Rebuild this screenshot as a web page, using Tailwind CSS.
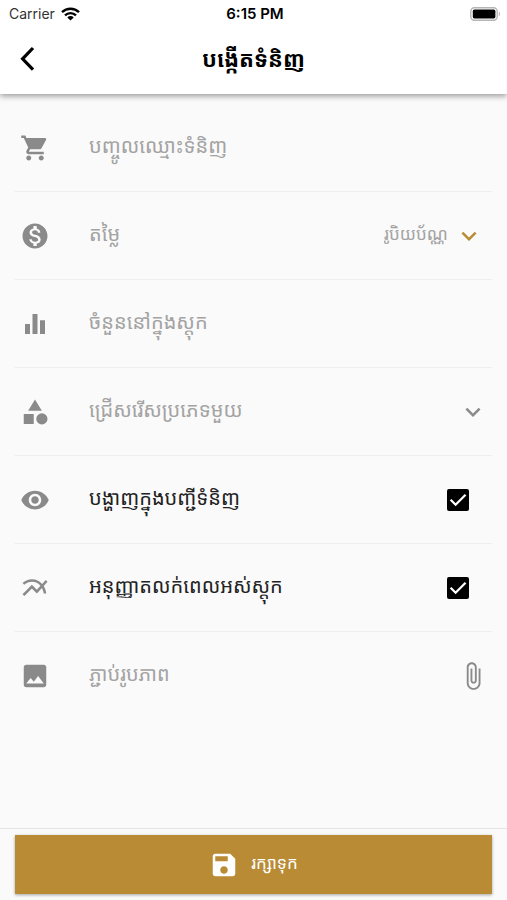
<!DOCTYPE html>
<html lang="km">
  <head>
    <meta charset="UTF-8" />
    <meta name="viewport" content="width=device-width, initial-scale=1.0" />
    <title>បង្កើតទំនិញ</title>
    <script src="https://cdn.jsdelivr.net/npm/@tailwindcss/browser@4"></script>
  </head>
  <body class="min-h-screen bg-[#fafafa] flex flex-col font-['Inter','Noto_Sans_Khmer','Noto_Sans',sans-serif] text-xl/10 text-[#222222]">
    <header class="bg-white shadow-[0_2px_6px_rgba(0,0,0,0.4)]">
      <!-- Status bar -->
      <div class="grid grid-cols-3 items-center h-7 pl-[9px] pr-1.5 text-sm text-black">
        <div class="flex items-center gap-1.5">
          <span class="text-[#333333]">Carrier</span>
          <svg class="w-[19px] h-[14px]" viewBox="0 0 19 14" fill="none" stroke="black" stroke-width="2.4">
            <path d="M1 5.2a12.2 12.2 0 0 1 17 0" />
            <path d="M4 8.3a8 8 0 0 1 11 0" />
            <path d="M9.5 13.6L6.3 10.4a4.6 4.6 0 0 1 6.4 0z" fill="black" stroke="none" />
          </svg>
        </div>
        <span class="text-center text-[15px] font-semibold">6:15 PM</span>
        <svg class="justify-self-end w-[31px] h-[14px]" viewBox="0 0 31 14">
          <rect x="0.8" y="0.8" width="26.4" height="12.4" rx="3.6" fill="white" stroke="#b5b5b5" stroke-width="1.4" />
          <rect x="2.8" y="2.6" width="22.6" height="8.8" rx="1.6" fill="black" />
          <path d="M28.8 4.8c1.6.6 1.6 3.8 0 4.4z" fill="#b5b5b5" />
        </svg>
      </div>

      <!-- Title -->
      <div class="grid grid-cols-[40px_1fr_40px] items-center h-[66px] px-[7px] pb-1">
        <button type="button" aria-label="ថយក្រោយ" class="flex justify-center cursor-pointer">
          <svg class="w-6 h-7" viewBox="0 0 24 28" fill="none" stroke="black" stroke-width="3.2">
            <path d="M18 3L7.6 13.8L18 24.6" />
          </svg>
        </button>
        <h1 class="text-center text-[22px] font-bold text-black">បង្កើតទំនិញ</h1>
      </div>
    </header>

    <form id="productForm" class="flex-1 px-[15px] pt-2.5 font-['Noto_Sans','Noto_Sans_Khmer',sans-serif]">
      <div class="flex items-center h-[88px] pl-[5px] border-b border-[#eeeeee]">
        <svg class="w-[30px] h-[30px] shrink-0" viewBox="0 0 24 24" fill="#8a8a8a">
          <path d="M7 18c-1.1 0-1.99.9-1.99 2S5.9 22 7 22s2-.9 2-2-.9-2-2-2zM1 2v2h2l3.6 7.59-1.35 2.45c-.16.28-.25.61-.25.96 0 1.1.9 2 2 2h12v-2H7.42c-.14 0-.25-.11-.25-.25l.03-.12.9-1.63h7.45c.75 0 1.41-.41 1.75-1.03l3.58-6.49A1 1 0 0 0 20 4H5.21l-.94-2H1zm16 16c-1.1 0-1.99.9-1.99 2s.89 2 1.99 2 2-.9 2-2-.9-2-2-2z" />
        </svg>
        <input type="text" aria-label="បញ្ចូលឈ្មោះទំនិញ" placeholder="បញ្ចូលឈ្មោះទំនិញ" class="flex-1 min-w-0 h-12 ml-[39px] pb-1 bg-transparent outline-none placeholder:overflow-visible placeholder:leading-10 placeholder:text-[#a3a3a3]" />
      </div>

      <div class="flex items-center h-[88px] pl-[5px] border-b border-[#eeeeee]">
        <svg class="w-[30px] h-[30px] shrink-0" viewBox="0 0 24 24" fill="#8a8a8a">
          <path d="M12 2C6.48 2 2 6.48 2 12s4.48 10 10 10 10-4.48 10-10S17.52 2 12 2zm1.41 16.09V20h-2.67v-1.93c-1.71-.36-3.16-1.46-3.27-3.4h1.96c.1 1.05.82 1.87 2.65 1.87 1.96 0 2.4-.98 2.4-1.59 0-.83-.44-1.61-2.67-2.14-2.48-.6-4.18-1.62-4.18-3.67 0-1.72 1.39-2.84 3.11-3.21V4h2.67v1.95c1.86.45 2.79 1.86 2.85 3.39H14.3c-.05-1.11-.64-1.87-2.22-1.87-1.5 0-2.4.68-2.4 1.64 0 .84.65 1.39 2.67 1.91s4.18 1.39 4.18 3.91c-.01 1.83-1.38 2.83-3.12 3.16z" />
        </svg>
        <input type="text" inputmode="decimal" aria-label="តម្លៃ" placeholder="តម្លៃ" class="flex-1 min-w-0 h-12 ml-[39px] pb-1 bg-transparent outline-none placeholder:overflow-visible placeholder:leading-10 placeholder:text-[#a3a3a3]" />
        <div class="grid items-center pr-2">
          <select aria-label="រូបិយប័ណ្ណ" class="col-start-1 row-start-1 appearance-none h-12 pr-9 pb-1 bg-transparent text-[17px] text-[#a3a3a3] outline-none">
            <option>រូបិយប័ណ្ណ</option>
          </select>
          <svg class="col-start-1 row-start-1 justify-self-end w-[30px] h-[30px] pointer-events-none" viewBox="0 0 24 24" fill="#b88b34">
            <path d="M7.41 8.59L12 13.17l4.59-4.58L18 10l-6 6-6-6z" />
          </svg>
        </div>
      </div>

      <div class="flex items-center h-[88px] pl-[5px] border-b border-[#eeeeee]">
        <svg class="w-[30px] h-[30px] shrink-0" viewBox="0 0 24 24" fill="#8a8a8a">
          <path d="M10 20h4V4h-4v16zm-6 0h4v-8H4v8zM16 9v11h4V9h-4z" />
        </svg>
        <input type="text" inputmode="numeric" aria-label="ចំនួននៅក្នុងស្តុក" placeholder="ចំនួននៅក្នុងស្តុក" class="flex-1 min-w-0 h-12 ml-[39px] pb-1 bg-transparent outline-none placeholder:overflow-visible placeholder:leading-10 placeholder:text-[#a3a3a3]" />
      </div>

      <div class="flex items-center h-[88px] pl-[5px] border-b border-[#eeeeee]">
        <svg class="w-[30px] h-[30px] shrink-0" viewBox="0 0 24 24" fill="#8a8a8a">
          <path d="M12 2l-5.5 9h11L12 2zM3 13.5h8v8H3z" />
          <circle cx="17.5" cy="17.5" r="4.5" />
        </svg>
        <div class="flex-1 grid items-center ml-[39px] pr-1">
          <select aria-label="ជ្រើសរើសប្រភេទមួយ" class="col-start-1 row-start-1 appearance-none w-full h-12 pb-1 bg-transparent text-[#a3a3a3] outline-none">
            <option>ជ្រើសរើសប្រភេទមួយ</option>
          </select>
          <svg class="col-start-1 row-start-1 justify-self-end w-[30px] h-[30px] pointer-events-none" viewBox="0 0 24 24" fill="#8a8a8a">
            <path d="M7.41 8.59L12 13.17l4.59-4.58L18 10l-6 6-6-6z" />
          </svg>
        </div>
      </div>

      <div class="flex items-center h-[88px] pl-[5px] border-b border-[#eeeeee]">
        <svg class="w-[30px] h-[30px] shrink-0" viewBox="0 0 24 24" fill="#8a8a8a">
          <path d="M12 4.5C7 4.5 2.73 7.61 1 12c1.73 4.39 6 7.5 11 7.5s9.27-3.11 11-7.5c-1.73-4.39-6-7.5-11-7.5zM12 17c-2.76 0-5-2.24-5-5s2.24-5 5-5 5 2.24 5 5-2.24 5-5 5zm0-8c-1.66 0-3 1.34-3 3s1.34 3 3 3 3-1.34 3-3-1.34-3-3-3z" />
        </svg>
        <label for="showInList" class="flex-1 ml-[39px] pb-1">បង្ហាញក្នុងបញ្ជីទំនិញ</label>
        <div class="grid pr-[23px]">
          <input type="checkbox" id="showInList" checked class="peer col-start-1 row-start-1 appearance-none w-[22px] h-[22px] rounded-xs border-2 border-black checked:bg-black" />
          <svg class="col-start-1 row-start-1 w-[22px] h-[22px] pointer-events-none invisible peer-checked:visible" viewBox="0 0 23 23" fill="none" stroke="white" stroke-width="2.4">
            <path d="M3.8 11.2L9 16.4L19.4 6" />
          </svg>
        </div>
      </div>

      <div class="flex items-center h-[88px] pl-[5px] border-b border-[#eeeeee]">
        <svg class="w-[30px] h-[30px] shrink-0" viewBox="0 0 24 24" fill="#8a8a8a">
          <path d="M22 6.92l-1.41-1.41-2.85 3.21C15.68 6.4 12.83 5 9.61 5 6.72 5 4.07 6.16 2 8l1.42 1.42C5.12 7.93 7.27 7 9.61 7c2.74 0 5.09 1.26 6.77 3.24l-2.88 3.24-4-4L2 16.99l1.5 1.5 6-6.01 4 4 4.05-4.55c.75 1.35 1.25 2.9 1.44 4.55H21c-.22-2.3-.95-4.39-2.04-6.14L22 6.92z" />
        </svg>
        <label for="sellOutOfStock" class="flex-1 ml-[39px] pb-1">អនុញ្ញាតលក់ពេលអស់ស្តុក</label>
        <div class="grid pr-[23px]">
          <input type="checkbox" id="sellOutOfStock" checked class="peer col-start-1 row-start-1 appearance-none w-[22px] h-[22px] rounded-xs border-2 border-black checked:bg-black" />
          <svg class="col-start-1 row-start-1 w-[22px] h-[22px] pointer-events-none invisible peer-checked:visible" viewBox="0 0 23 23" fill="none" stroke="white" stroke-width="2.4">
            <path d="M3.8 11.2L9 16.4L19.4 6" />
          </svg>
        </div>
      </div>

      <div class="flex items-center h-[88px] pl-[5px]">
        <svg class="w-[30px] h-[30px] shrink-0" viewBox="0 0 24 24" fill="#8a8a8a">
          <path d="M21 19V5c0-1.1-.9-2-2-2H5c-1.1 0-2 .9-2 2v14c0 1.1.9 2 2 2h14c1.1 0 2-.9 2-2zM8.5 13.5l2.5 3.01L14.5 12l4.5 6H5l3.5-4.5z" />
        </svg>
        <button type="button" class="flex-1 flex items-center justify-between h-12 ml-[39px] pr-1 text-[#a3a3a3] cursor-pointer">
          <span class="pb-1">ភ្ជាប់រូបភាព</span>
          <svg class="w-[30px] h-[30px]" viewBox="0 0 24 24" fill="#8a8a8a">
            <path d="M16.5 6v11.5c0 2.21-1.79 4-4 4s-4-1.79-4-4V5c0-1.38 1.12-2.5 2.5-2.5s2.5 1.12 2.5 2.5v10.5c0 .55-.45 1-1 1s-1-.45-1-1V6H10v9.5c0 1.38 1.12 2.5 2.5 2.5s2.5-1.12 2.5-2.5V5c0-2.21-1.79-4-4-4S7 2.79 7 5v12.5c0 3.04 2.46 5.5 5.5 5.5s5.5-2.46 5.5-5.5V6h-1.5z" />
          </svg>
        </button>
      </div>
    </form>

    <footer class="px-[15px] pt-1.5 pb-1.5 border-t border-[#e4e4e4]">
      <button type="submit" form="productForm" class="w-full h-[59px] flex items-center justify-center gap-3 bg-[#b88b34] text-[17px] text-white shadow-[0_1px_3px_rgba(0,0,0,0.35)] cursor-pointer">
        <svg class="w-[30px] h-[30px]" viewBox="0 0 24 24" fill="white">
          <path d="M17 3H5c-1.11 0-2 .9-2 2v14c0 1.1.89 2 2 2h14c1.1 0 2-.9 2-2V7l-4-4zm-5 16c-1.66 0-3-1.34-3-3s1.34-3 3-3 3 1.34 3 3-1.34 3-3 3zm3-10H5V5h10v4z" />
        </svg>
        <span class="pb-1">រក្សាទុក</span>
      </button>
    </footer>
  </body>
</html>
